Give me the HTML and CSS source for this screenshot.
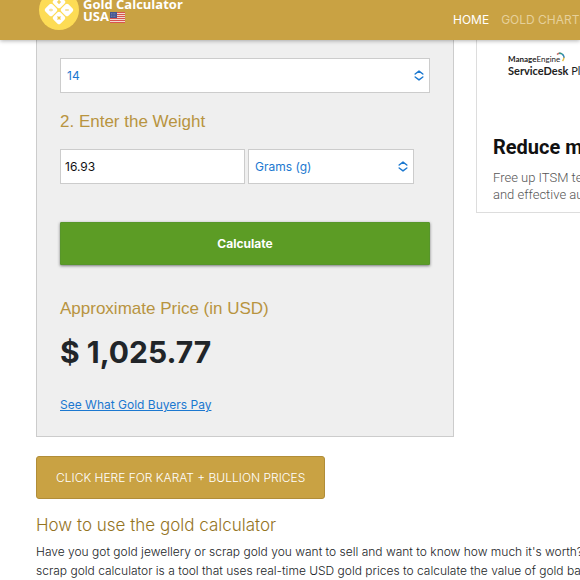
FILE: index.html
```html
<!DOCTYPE html>
<html lang="en">
<head>
<meta charset="utf-8">
<title>Gold Calculator USA</title>
<link rel="stylesheet" href="styles.css">
</head>
<body>
<header class="site-header">
  <a class="brand" href="#">
    <svg class="brand-logo" viewBox="0 0 40 40" aria-hidden="true">
      <circle cx="20" cy="20" r="20" fill="#fddc55"/>
      <g fill="#fff">
        <rect x="15" y="7" width="10" height="10" rx="2" transform="rotate(45 20 12)"/>
        <rect x="7" y="15" width="10" height="10" rx="2" transform="rotate(45 12 20)"/>
        <rect x="23" y="15" width="10" height="10" rx="2" transform="rotate(45 28 20)"/>
        <rect x="15" y="23" width="10" height="10" rx="2" transform="rotate(45 20 28)"/>
      </g>
      <path d="M18 12h4M20 10v4M26.200 20h3.600M10.200 20h3.600M12 18.200v.4M12 21.400v.4M18.500 26.500l3 3M21.500 26.500l-3 3" fill="none" stroke="#f0c83e" stroke-width="1.200"/>
    </svg>
    <span class="brand-name">Gold Calculator<br>USA<svg class="flag" viewBox="0 0 15 11" aria-hidden="true"><rect width="15" height="11" fill="#f0d9cf"/><path d="M0 .5h15M0 2.500h15M0 4.500h15M0 6.500h15M0 8.500h15M0 10.500h15" stroke="#d9544f"/><rect width="7" height="6" fill="#45568f"/><path d="M1 1.500h5M1 3h5M1 4.500h5" stroke="#8f9bc0" stroke-width=".5" stroke-dasharray="1 .6"/></svg></span>
  </a>
  <nav class="site-nav">
    <a class="current" href="#">HOME</a>
    <a href="#">GOLD CHARTS</a>
  </nav>
</header>
<div class="layout">
  <main class="content">
    <form class="calculator">
      <div class="select-box">
        <select aria-label="Karat"><option>14</option></select>
        <svg class="arrows" viewBox="0 0 9 10" aria-hidden="true"><path d="M1 3.600L4.500 1 8 3.600M1 6.400L4.500 9 8 6.400"/></svg>
      </div>
      <h2 class="step"><label for="weight">2. Enter the Weight</label></h2>
      <div class="weight-row">
        <input id="weight" type="text" value="16.93">
        <div class="select-box">
          <select aria-label="Unit"><option>Grams (g)</option></select>
          <svg class="arrows" viewBox="0 0 9 10" aria-hidden="true"><path d="M1 3.600L4.500 1 8 3.600M1 6.400L4.500 9 8 6.400"/></svg>
        </div>
      </div>
      <button class="calculate" type="button">Calculate</button>
      <h2 class="result-title">Approximate Price (in USD)</h2>
      <output class="price">$ 1,025.77</output>
      <a class="buyers" href="#">See What Gold Buyers Pay</a>
    </form>
    <a class="prices-link" href="#">CLICK HERE FOR KARAT + BULLION PRICES</a>
    <h2 class="guide-title">How to use the gold calculator</h2>
    <p class="guide">Have you got gold jewellery or scrap gold you want to sell and want to know how much it's worth? Our<br>scrap gold calculator is a tool that uses real-time USD gold prices to calculate the value of gold based</p>
  </main>
  <aside class="ad">
    <div class="ad-brand">
      <div class="ad-maker"><b>Manage</b>Engine<svg class="ad-arc" viewBox="0 0 10 10" aria-hidden="true"><g fill="none" stroke-width="1.500"><path d="M1 2.500Q3 .8 5 1.500" stroke="#c66a60"/><path d="M3 1.400Q5.500 1 7 3" stroke="#2c9a91"/><path d="M6.500 2.200Q8.300 4 8 6" stroke="#3685b5"/><path d="M8 5.500Q7.700 7.500 6.500 9" stroke="#e5bd45"/></g></svg></div>
      <div class="ad-product"><b>ServiceDesk</b> Plus</div>
    </div>
    <div class="ad-title">Reduce manual work</div>
    <p class="ad-text">Free up ITSM teams with quick<br>and effective automation</p>
  </aside>
</div>
</body>
</html>
```
FILE: styles.css
```css
* { box-sizing: border-box; }
body {
  margin: 0;
  overflow: hidden;
  background: #fff;
  color: #212427;
  font: 12px/19px Inter, "Liberation Sans", sans-serif;
}
h2, p { margin: 0; font-weight: 400; }
a { color: #1b78d0; }
.site-header {
  position: relative;
  display: flex;
  align-items: flex-end;
  justify-content: space-between;
  height: 40px;
  padding: 0 0 10px 39px;
  background: #c9a243;
  box-shadow: 0 1px 4px rgba(0, 0, 0, .3);
}
.brand { display: flex; align-items: center; gap: 4px; color: #fff; text-decoration: none; }
.brand-logo { width: 40px; height: 40px; }
.brand-name { font: 700 13px/12px "Open Sans", sans-serif; white-space: nowrap; }
.flag { width: 15px; height: 11px; margin-left: 1px; vertical-align: -2px; }
.site-nav { display: flex; flex: 0 0 127px; min-width: 0; gap: 12px; height: 20px; font-size: 12px; line-height: 20px; white-space: nowrap; }
.site-nav a { color: #e6d09a; text-decoration: none; }
.site-nav .current { color: #fff; }
.layout {
  display: grid;
  grid-template-columns: minmax(0, 418fr) minmax(0, 104fr);
  column-gap: 22px;
  padding-left: 36px;
}
.calculator {
  padding: 18px 23px 22px;
  border: 1px solid #ccc;
  border-top: 0;
  background: #efefef;
}
.select-box { position: relative; }
select, input {
  display: block;
  width: 100%;
  height: 35px;
  margin: 0;
  border: 1px solid #ccc;
  border-radius: 0;
  background: #fff;
  font: 12px Inter, sans-serif;
  appearance: none;
}
select { padding: 0 6px; color: #1b78d0; }
input { padding: 0 4px; color: #111; }
.arrows { position: absolute; right: 6px; top: 12px; width: 10px; height: 11px; pointer-events: none; }
.arrows path { fill: none; stroke: #1b78d0; stroke-width: 1.3; stroke-linecap: round; stroke-linejoin: round; }
.step, .result-title { color: #b8943f; font: 17px/20px "Liberation Sans", sans-serif; }
.step { margin: 19px 0 17px; }
.weight-row { display: grid; grid-template-columns: 185fr 166fr; gap: 3px; margin-right: 16px; }
.calculate {
  display: block;
  width: 100%;
  height: 43px;
  margin: 38px 0 34px;
  border: 1px solid #57962a;
  border-radius: 1px;
  background: #5c9c25;
  box-shadow: 0 1px 3px rgba(0, 0, 0, .5);
  color: #fff;
  font: 700 12px Inter, sans-serif;
}
.price { display: block; margin: 14px 0 24px; color: #212529; font-size: 30px; font-weight: 700; line-height: 38px; }
.buyers { display: block; width: max-content; }
.prices-link {
  display: block;
  width: max-content;
  margin: 19px 0 16px;
  padding: 11px 19px;
  border: 1px solid #b18d38;
  border-radius: 3px;
  background: #c9a243;
  color: #fff;
  font-weight: 300;
  text-decoration: none;
}
.guide-title { color: #94741f; font-size: 17px; font-weight: 300; line-height: 20px; }
.guide { margin-top: 7px; font-weight: 300; white-space: nowrap; }
.ad {
  align-self: start;
  padding: 12px 0 9px 16px;
  border: solid #ddd;
  border-width: 0 0 1px 1px;
  white-space: nowrap;
  overflow: hidden;
}
.ad-brand { padding-left: 15px; color: #222; font-family: Lato, sans-serif; }
.ad-maker { font-size: 8px; line-height: 11px; }
.ad-product { font-size: 11px; line-height: 11px; }
.ad-arc { width: 10px; height: 10px; margin-left: -4px; }
.ad-title { margin: 59px 0 10px; color: #111; font: 700 20px/24px Roboto, sans-serif; }
.ad-text { color: #555; font: 300 13px/17px Roboto, sans-serif; }
```
